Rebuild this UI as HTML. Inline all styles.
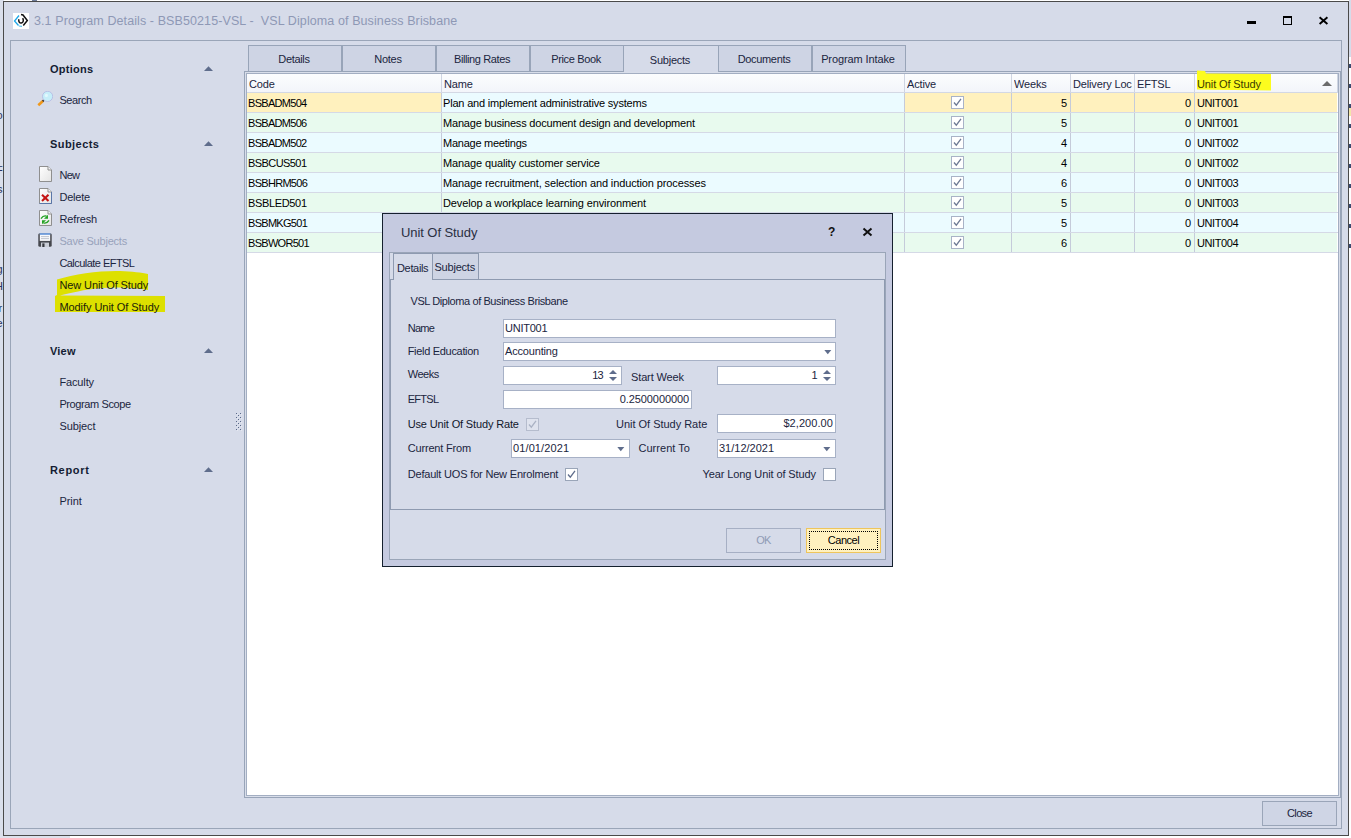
<!DOCTYPE html><html><head><meta charset="utf-8"><title>3.1 Program Details</title><style>
*{box-sizing:border-box}
html,body{margin:0;padding:0}
body{width:1351px;height:838px;overflow:hidden;background:#fff;position:relative;font-family:"Liberation Sans",sans-serif;font-size:11px;color:#1b2540;letter-spacing:-0.15px}
.a{position:absolute}
.t{position:absolute;white-space:pre;line-height:14px;height:14px}
#win{left:3px;top:1px;width:1346px;height:835px;background:#d6dbe9;border:1px solid #4a4a4a}
#panel{left:10px;top:40px;width:1332px;height:789px;border:1px solid #9aa5b8}
.gh{font-weight:bold;font-size:11px;color:#141c33;letter-spacing:0}
.arr{width:0;height:0;border-left:4.5px solid transparent;border-right:4.5px solid transparent;border-bottom:5px solid #5f6d8c}
.tab{position:absolute;top:45px;height:27px;width:94px;border:1px solid #98a4b8;background:#ced4e4;text-align:center;line-height:26px;font-size:11px;color:#1b2540;letter-spacing:0;padding-right:2px}
.tab.sel{background:#d6dbe9;border-bottom:none;height:27px;line-height:28px;z-index:2}
.cell{position:absolute;height:19px;line-height:21px;white-space:pre;overflow:hidden;color:#000;padding:0 2px}
.hd{position:absolute;top:74px;height:18px;line-height:20px;white-space:pre;overflow:hidden;color:#1b2540;padding:0 2px;background:linear-gradient(#fcfdfe,#f3f5fa);border-right:1px solid #cfd5e2}
.vl{position:absolute;width:1px;background:#c9cfdd}
.hl{position:absolute;height:1px;background:#d3d8e4}
.cb{position:absolute;width:13px;height:13px;border:1px solid #9aa5b8;background:#fff}
.inp{position:absolute;height:19px;border:1px solid #a7b1c6;background:#fff;line-height:17px;padding:0 2px 0 1px;white-space:pre;color:#1b2540}
.lbl{position:absolute;white-space:pre;line-height:14px;color:#1b2540}
</style></head><body>
<div class="a" style="left:0;top:0;width:4px;height:836px;background:#dadfeb"></div>
<div class="a" style="left:0;top:836px;width:70px;height:2px;background:#dde1ec"></div>
<div class="a" style="left:1349px;top:0;width:2px;height:57px;background:#d6dbe9"></div>
<div class="a" style="left:1349px;top:64px;width:2px;height:4px;background:#3b4a70"></div>
<div class="a" style="left:1349px;top:84px;width:2px;height:4px;background:#3b4a70"></div>
<div class="a" style="left:1349px;top:104px;width:2px;height:4px;background:#3b4a70"></div>
<div class="a" style="left:1349px;top:124px;width:2px;height:4px;background:#3b4a70"></div>
<div class="a" style="left:1349px;top:144px;width:2px;height:4px;background:#3b4a70"></div>
<div class="a" style="left:1349px;top:164px;width:2px;height:4px;background:#3b4a70"></div>
<div class="a" style="left:1349px;top:184px;width:2px;height:4px;background:#3b4a70"></div>
<div class="a" style="left:1349px;top:204px;width:2px;height:4px;background:#3b4a70"></div>
<div class="a" style="left:1349px;top:224px;width:2px;height:4px;background:#3b4a70"></div>
<div class="a" style="left:1349px;top:244px;width:2px;height:4px;background:#3b4a70"></div>
<div class="a" style="left:1349px;top:108px;width:2px;height:8px;background:#f3e6a8"></div>
<div class="t" style="left:-3.5px;top:108px;color:#2a3560">o</div>
<div class="t" style="left:-4px;top:163px;color:#2a3560">F</div>
<div class="t" style="left:-3px;top:182px;color:#2a3560">s</div>
<div class="t" style="left:-3.5px;top:262px;color:#2a3560">g</div>
<div class="t" style="left:-5px;top:279px;color:#2a3560">H</div>
<div class="t" style="left:-1.5px;top:301px;color:#2a3560">r</div>
<div class="t" style="left:-3.5px;top:316px;color:#2a3560">e</div>
<div class="a" style="left:32px;top:0;width:5px;height:1px;background:#6f7d9b"></div>
<div id="win" class="a"></div>
<div id="panel" class="a"></div>
<svg class="a" style="left:13px;top:13px" width="16" height="16" viewBox="0 0 16 16"><rect width="16" height="16" fill="#fff"/><path d="M6 2.5 L1.5 8 L5.5 12.5" fill="none" stroke="#1ea7e8" stroke-width="1.3"/><path d="M5.8 13 L9 13.3" fill="none" stroke="#58c3ef" stroke-width="1.2"/><path d="M8 1.6 L10 2 L14.3 7.6 L10.3 12.4" fill="none" stroke="#111" stroke-width="1.5"/><path d="M5.9 6.2 C5.3 8.6 6.6 10.2 8.3 10 C10.2 9.7 11 7.6 9.7 5.2" fill="none" stroke="#111" stroke-width="1.5"/></svg>
<div class="t" style="left:34px;top:13px;font-size:12.5px;color:#8e98b5;letter-spacing:0.095px;line-height:16px;height:16px">3.1 Program Details - BSB50215-VSL -  VSL Diploma of Business Brisbane</div>
<div class="a" style="left:1247px;top:21px;width:9px;height:3px;background:#000"></div>
<div class="a" style="left:1283px;top:16px;width:9px;height:9px;border:1px solid #000;border-top-width:2px"></div>
<svg class="a" style="left:1318px;top:16px" width="11" height="10" viewBox="0 0 11 10"><path d="M1.6 1.2 L9.4 8 M9.4 1.2 L1.6 8" stroke="#000" stroke-width="1.9" fill="none"/></svg>
<div class="t gh" style="left:50px;top:62px;letter-spacing:0.241px">Options</div>
<svg class="a" style="left:204px;top:66px" width="9" height="5" viewBox="0 0 9 5"><path d="M0 5 H9 L4.5 0.2 Z" fill="#5f6d8c"/></svg>
<div class="t" style="left:59.4px;top:93px;color:#1b2540;letter-spacing:-0.411px">Search</div>
<div class="t gh" style="left:50px;top:137px;letter-spacing:0.436px">Subjects</div>
<svg class="a" style="left:204px;top:141px" width="9" height="5" viewBox="0 0 9 5"><path d="M0 5 H9 L4.5 0.2 Z" fill="#5f6d8c"/></svg>
<svg class="a" style="left:50px;top:265px" width="125" height="52" viewBox="50 265 125 52"><path d="M57 279.5 C75 274 100 270.5 120 271 C132 271.5 142 272.5 148 274 L148 290 C138 288 120 286.5 100 288 C85 289.5 70 293 60 295.5 L165 296 L165 312 L55 312 L55 296 L57 295 Z" fill="#dde000"/></svg>
<div class="t" style="left:59.4px;top:168px;color:#1b2540;letter-spacing:-0.700px">New</div>
<div class="t" style="left:59.4px;top:190px;color:#1b2540;letter-spacing:-0.200px">Delete</div>
<div class="t" style="left:59.4px;top:212px;color:#1b2540;letter-spacing:-0.120px">Refresh</div>
<div class="t" style="left:59.4px;top:234px;color:#98a2bb;letter-spacing:-0.210px">Save Subjects</div>
<div class="t" style="left:59.4px;top:256px;color:#1b2540;letter-spacing:-0.539px">Calculate EFTSL</div>
<div class="t" style="left:59.4px;top:278px;color:#1a2208;letter-spacing:-0.099px">New Unit Of Study</div>
<div class="t" style="left:59.4px;top:300px;color:#1a2208;letter-spacing:-0.056px">Modify Unit Of Study</div>
<div class="t gh" style="left:50px;top:344px;letter-spacing:0.210px">View</div>
<svg class="a" style="left:204px;top:348px" width="9" height="5" viewBox="0 0 9 5"><path d="M0 5 H9 L4.5 0.2 Z" fill="#5f6d8c"/></svg>
<div class="t" style="left:59.4px;top:375px;color:#1b2540;letter-spacing:-0.126px">Faculty</div>
<div class="t" style="left:59.4px;top:397px;color:#1b2540;letter-spacing:-0.394px">Program Scope</div>
<div class="t" style="left:59.4px;top:419px;color:#1b2540;letter-spacing:-0.082px">Subject</div>
<div class="t gh" style="left:50px;top:463px;letter-spacing:0.671px">Report</div>
<svg class="a" style="left:204px;top:467px" width="9" height="5" viewBox="0 0 9 5"><path d="M0 5 H9 L4.5 0.2 Z" fill="#5f6d8c"/></svg>
<div class="t" style="left:59.4px;top:494px;color:#1b2540;letter-spacing:-0.055px">Print</div>
<svg class="a" style="left:37px;top:91px" width="16" height="16" viewBox="0 0 16 16"><path d="M1.3 14.2 L6.2 9.7" stroke="#f0981a" stroke-width="2.6" stroke-linecap="butt"/><path d="M5.6 10.2 L6.8 9.2" stroke="#3a3a3a" stroke-width="2"/><circle cx="10.6" cy="5.4" r="5.1" fill="#c6eef9" stroke="#b3b8e2" stroke-width="0.8"/><circle cx="9.4" cy="4.4" r="1.6" fill="#e2f8fd"/></svg>
<svg class="a" style="left:38px;top:166px" width="16" height="16" viewBox="0 0 16 16"><defs><linearGradient id="pg166" x1="0" y1="0" x2="1" y2="1"><stop offset="0" stop-color="#fff"/><stop offset="1" stop-color="#e4e4e4"/></linearGradient></defs><path d="M1.5 0.5 H10 L13.5 4 V15.5 H1.5 Z" fill="url(#pg166)" stroke="#8f8f8f" stroke-width="1"/><path d="M10 0.5 V4 H13.5" fill="#f4f4f4" stroke="#8f8f8f" stroke-width="1"/></svg>
<svg class="a" style="left:38px;top:188px" width="16" height="16" viewBox="0 0 16 16"><defs><linearGradient id="pg188" x1="0" y1="0" x2="1" y2="1"><stop offset="0" stop-color="#fff"/><stop offset="1" stop-color="#e4e4e4"/></linearGradient></defs><path d="M1.5 0.5 H10 L13.5 4 V15.5 H1.5 Z" fill="url(#pg188)" stroke="#8f8f8f" stroke-width="1"/><path d="M10 0.5 V4 H13.5" fill="#f4f4f4" stroke="#8f8f8f" stroke-width="1"/><path d="M1.5 15.5 H13.5 V4" fill="none" stroke="#5a76a8" stroke-width="1"/><path d="M4 6.8 L10.5 13 M10.5 6.8 L4 13" stroke="#c41414" stroke-width="2.1" fill="none"/></svg>
<svg class="a" style="left:38px;top:210px" width="16" height="16" viewBox="0 0 16 16"><defs><linearGradient id="pg210" x1="0" y1="0" x2="1" y2="1"><stop offset="0" stop-color="#fff"/><stop offset="1" stop-color="#e4e4e4"/></linearGradient></defs><path d="M1.5 0.5 H10 L13.5 4 V15.5 H1.5 Z" fill="url(#pg210)" stroke="#8f8f8f" stroke-width="1"/><path d="M10 0.5 V4 H13.5" fill="#f4f4f4" stroke="#8f8f8f" stroke-width="1"/><path d="M3 8.7 C4.4 6.6 6.2 5.3 8.6 6.2" fill="none" stroke="#22a222" stroke-width="1.4"/><path d="M10 4.8 V8.8 H6 Z" fill="#22a222"/><path d="M11 10.3 C9.6 12.4 7.8 13.7 5.4 12.8" fill="none" stroke="#22a222" stroke-width="1.4"/><path d="M4 14.2 V10.2 H8 Z" fill="#22a222"/></svg>
<svg class="a" style="left:38px;top:233px" width="14" height="14" viewBox="0 0 14 14"><rect x="0.3" y="0.3" width="13.4" height="13.4" rx="1.5" fill="#45474d"/><rect x="1.8" y="0.3" width="10.4" height="7.6" fill="#f7f8fb"/><rect x="1.8" y="0.3" width="10.4" height="1.4" fill="#4d86d6"/><path d="M3 3.6 H11 M3 5.6 H11" stroke="#b9bec8" stroke-width="0.9"/><rect x="3" y="9.6" width="8" height="4.4" fill="#c9cdd6"/><rect x="4.3" y="10.4" width="2.2" height="3.6" fill="#35373d"/></svg>
<svg class="a" style="left:235px;top:412px" width="8" height="20" viewBox="0 0 8 20"><rect x="1" y="1" width="1" height="1" fill="#5b6a8a"/><rect x="2" y="2" width="1" height="1" fill="#e6e9f2"/><rect x="5" y="1" width="1" height="1" fill="#5b6a8a"/><rect x="6" y="2" width="1" height="1" fill="#e6e9f2"/><rect x="3" y="3" width="1" height="1" fill="#5b6a8a"/><rect x="4" y="4" width="1" height="1" fill="#e6e9f2"/><rect x="1" y="5" width="1" height="1" fill="#5b6a8a"/><rect x="2" y="6" width="1" height="1" fill="#e6e9f2"/><rect x="5" y="5" width="1" height="1" fill="#5b6a8a"/><rect x="6" y="6" width="1" height="1" fill="#e6e9f2"/><rect x="3" y="7" width="1" height="1" fill="#5b6a8a"/><rect x="4" y="8" width="1" height="1" fill="#e6e9f2"/><rect x="1" y="9" width="1" height="1" fill="#5b6a8a"/><rect x="2" y="10" width="1" height="1" fill="#e6e9f2"/><rect x="5" y="9" width="1" height="1" fill="#5b6a8a"/><rect x="6" y="10" width="1" height="1" fill="#e6e9f2"/><rect x="3" y="11" width="1" height="1" fill="#5b6a8a"/><rect x="4" y="12" width="1" height="1" fill="#e6e9f2"/><rect x="1" y="13" width="1" height="1" fill="#5b6a8a"/><rect x="2" y="14" width="1" height="1" fill="#e6e9f2"/><rect x="5" y="13" width="1" height="1" fill="#5b6a8a"/><rect x="6" y="14" width="1" height="1" fill="#e6e9f2"/><rect x="3" y="15" width="1" height="1" fill="#5b6a8a"/><rect x="4" y="16" width="1" height="1" fill="#e6e9f2"/><rect x="1" y="17" width="1" height="1" fill="#5b6a8a"/><rect x="2" y="18" width="1" height="1" fill="#e6e9f2"/><rect x="5" y="17" width="1" height="1" fill="#5b6a8a"/><rect x="6" y="18" width="1" height="1" fill="#e6e9f2"/></svg>
<div class="tab" style="left:248px;letter-spacing:-0.321px">Details</div>
<div class="tab" style="left:342px;letter-spacing:-0.284px">Notes</div>
<div class="tab" style="left:436px;letter-spacing:-0.387px">Billing Rates</div>
<div class="tab" style="left:530px;letter-spacing:-0.355px">Price Book</div>
<div class="tab sel" style="left:623px;width:96px;letter-spacing:-0.242px">Subjects</div>
<div class="tab" style="left:718px;letter-spacing:-0.329px">Documents</div>
<div class="tab" style="left:812px;letter-spacing:-0.108px">Program Intake</div>
<div class="a" style="left:244px;top:71px;width:1097px;height:727px;border:1px solid #98a4b8;background:#d9deea"></div>
<div class="a" style="left:246px;top:73px;width:1093px;height:723px;border:1px solid #a3aec2;background:#fff"></div>
<div class="hd" style="left:247px;width:195px"><div style="overflow:hidden;height:18px">Code</div></div>
<div class="hd" style="left:442px;width:463px"><div style="overflow:hidden;height:18px">Name</div></div>
<div class="hd" style="left:905px;width:107px"><div style="overflow:hidden;height:18px">Active</div></div>
<div class="hd" style="left:1012px;width:59px"><div style="overflow:hidden;height:18px">Weeks</div></div>
<div class="hd" style="left:1071px;width:64px"><div style="overflow:hidden;height:18px">Delivery Location</div></div>
<div class="hd" style="left:1135px;width:60px"><div style="overflow:hidden;height:18px">EFTSL</div></div>
<div class="hd" style="left:1195px;width:143px"><div style="overflow:hidden;height:18px"></div></div>
<svg class="a" style="left:1190px;top:68px" width="90" height="26" viewBox="1190 68 90 26"><path d="M1197 70.5 L1205 71 L1206 73.5 L1271 74 L1271 90.5 L1197 89.5 Z" fill="#fcfc1e"/></svg>
<div class="t" style="left:1197px;top:77px;color:#3a3a00;letter-spacing:-0.118px">Unit Of Study</div>
<div class="a" style="left:1322px;top:81px;width:0;height:0;border-left:5px solid transparent;border-right:5px solid transparent;border-bottom:5px solid #6b6b6b"></div>
<div class="hl" style="left:247px;top:92px;width:1091px;background:#d3d8e4"></div>
<div class="cell" style="left:247px;top:93px;width:194px;background:#fff1be;text-align:left;padding:0 3px 0 1px;letter-spacing:-0.700px">BSBADM504</div>
<div class="vl" style="left:441px;top:93px;height:19px;background:#c5cbda"></div>
<div class="cell" style="left:442px;top:93px;width:462px;background:#ebfbff;text-align:left;padding:0 0 0 1px;letter-spacing:-0.188px">Plan and implement administrative systems</div>
<div class="vl" style="left:904px;top:93px;height:19px;background:#c5cbda"></div>
<div class="cell" style="left:905px;top:93px;width:106px;background:#fff1be;text-align:left;padding:0 3px 0 1px"></div>
<div class="vl" style="left:1011px;top:93px;height:19px;background:#c5cbda"></div>
<div class="cell" style="left:1012px;top:93px;width:58px;background:#fff1be;text-align:right;padding:0 3px 0 0">5</div>
<div class="vl" style="left:1070px;top:93px;height:19px;background:#c5cbda"></div>
<div class="cell" style="left:1071px;top:93px;width:63px;background:#fff1be;text-align:left;padding:0 3px 0 1px"></div>
<div class="vl" style="left:1134px;top:93px;height:19px;background:#c5cbda"></div>
<div class="cell" style="left:1135px;top:93px;width:59px;background:#fff1be;text-align:right;padding:0 3px 0 0">0</div>
<div class="vl" style="left:1194px;top:93px;height:19px;background:#c5cbda"></div>
<div class="cell" style="left:1195px;top:93px;width:142px;background:#fff1be;text-align:left;padding:0 0 0 2px;letter-spacing:-0.386px">UNIT001</div>
<div class="hl" style="left:247px;top:112px;width:1091px;background:#d5d9e6"></div>
<div class="cb" style="left:951px;top:96px;border-color:#a9b3c7"><svg width="11" height="11" viewBox="0 0 11 11" style="position:absolute;left:0;top:0"><path d="M2 5.5 L4.3 8.2 L9 1.8" fill="none" stroke="#6e7a94" stroke-width="1.3"/></svg></div>
<div class="cell" style="left:247px;top:113px;width:194px;background:#e8faee;text-align:left;padding:0 3px 0 1px;letter-spacing:-0.700px">BSBADM506</div>
<div class="vl" style="left:441px;top:113px;height:19px;background:#c5cbda"></div>
<div class="cell" style="left:442px;top:113px;width:462px;background:#e8faee;text-align:left;padding:0 0 0 1px;letter-spacing:-0.185px">Manage business document design and development</div>
<div class="vl" style="left:904px;top:113px;height:19px;background:#c5cbda"></div>
<div class="cell" style="left:905px;top:113px;width:106px;background:#e8faee;text-align:left;padding:0 3px 0 1px"></div>
<div class="vl" style="left:1011px;top:113px;height:19px;background:#c5cbda"></div>
<div class="cell" style="left:1012px;top:113px;width:58px;background:#e8faee;text-align:right;padding:0 3px 0 0">5</div>
<div class="vl" style="left:1070px;top:113px;height:19px;background:#c5cbda"></div>
<div class="cell" style="left:1071px;top:113px;width:63px;background:#e8faee;text-align:left;padding:0 3px 0 1px"></div>
<div class="vl" style="left:1134px;top:113px;height:19px;background:#c5cbda"></div>
<div class="cell" style="left:1135px;top:113px;width:59px;background:#e8faee;text-align:right;padding:0 3px 0 0">0</div>
<div class="vl" style="left:1194px;top:113px;height:19px;background:#c5cbda"></div>
<div class="cell" style="left:1195px;top:113px;width:142px;background:#e8faee;text-align:left;padding:0 0 0 2px;letter-spacing:-0.386px">UNIT001</div>
<div class="hl" style="left:247px;top:132px;width:1091px;background:#d5d9e6"></div>
<div class="cb" style="left:951px;top:116px;border-color:#a9b3c7"><svg width="11" height="11" viewBox="0 0 11 11" style="position:absolute;left:0;top:0"><path d="M2 5.5 L4.3 8.2 L9 1.8" fill="none" stroke="#6e7a94" stroke-width="1.3"/></svg></div>
<div class="cell" style="left:247px;top:133px;width:194px;background:#ebfbff;text-align:left;padding:0 3px 0 1px;letter-spacing:-0.700px">BSBADM502</div>
<div class="vl" style="left:441px;top:133px;height:19px;background:#c5cbda"></div>
<div class="cell" style="left:442px;top:133px;width:462px;background:#ebfbff;text-align:left;padding:0 0 0 1px;letter-spacing:-0.246px">Manage meetings</div>
<div class="vl" style="left:904px;top:133px;height:19px;background:#c5cbda"></div>
<div class="cell" style="left:905px;top:133px;width:106px;background:#ebfbff;text-align:left;padding:0 3px 0 1px"></div>
<div class="vl" style="left:1011px;top:133px;height:19px;background:#c5cbda"></div>
<div class="cell" style="left:1012px;top:133px;width:58px;background:#ebfbff;text-align:right;padding:0 3px 0 0">4</div>
<div class="vl" style="left:1070px;top:133px;height:19px;background:#c5cbda"></div>
<div class="cell" style="left:1071px;top:133px;width:63px;background:#ebfbff;text-align:left;padding:0 3px 0 1px"></div>
<div class="vl" style="left:1134px;top:133px;height:19px;background:#c5cbda"></div>
<div class="cell" style="left:1135px;top:133px;width:59px;background:#ebfbff;text-align:right;padding:0 3px 0 0">0</div>
<div class="vl" style="left:1194px;top:133px;height:19px;background:#c5cbda"></div>
<div class="cell" style="left:1195px;top:133px;width:142px;background:#ebfbff;text-align:left;padding:0 0 0 2px;letter-spacing:-0.386px">UNIT002</div>
<div class="hl" style="left:247px;top:152px;width:1091px;background:#d5d9e6"></div>
<div class="cb" style="left:951px;top:136px;border-color:#a9b3c7"><svg width="11" height="11" viewBox="0 0 11 11" style="position:absolute;left:0;top:0"><path d="M2 5.5 L4.3 8.2 L9 1.8" fill="none" stroke="#6e7a94" stroke-width="1.3"/></svg></div>
<div class="cell" style="left:247px;top:153px;width:194px;background:#e8faee;text-align:left;padding:0 3px 0 1px;letter-spacing:-0.574px">BSBCUS501</div>
<div class="vl" style="left:441px;top:153px;height:19px;background:#c5cbda"></div>
<div class="cell" style="left:442px;top:153px;width:462px;background:#e8faee;text-align:left;padding:0 0 0 1px;letter-spacing:-0.127px">Manage quality customer service</div>
<div class="vl" style="left:904px;top:153px;height:19px;background:#c5cbda"></div>
<div class="cell" style="left:905px;top:153px;width:106px;background:#e8faee;text-align:left;padding:0 3px 0 1px"></div>
<div class="vl" style="left:1011px;top:153px;height:19px;background:#c5cbda"></div>
<div class="cell" style="left:1012px;top:153px;width:58px;background:#e8faee;text-align:right;padding:0 3px 0 0">4</div>
<div class="vl" style="left:1070px;top:153px;height:19px;background:#c5cbda"></div>
<div class="cell" style="left:1071px;top:153px;width:63px;background:#e8faee;text-align:left;padding:0 3px 0 1px"></div>
<div class="vl" style="left:1134px;top:153px;height:19px;background:#c5cbda"></div>
<div class="cell" style="left:1135px;top:153px;width:59px;background:#e8faee;text-align:right;padding:0 3px 0 0">0</div>
<div class="vl" style="left:1194px;top:153px;height:19px;background:#c5cbda"></div>
<div class="cell" style="left:1195px;top:153px;width:142px;background:#e8faee;text-align:left;padding:0 0 0 2px;letter-spacing:-0.386px">UNIT002</div>
<div class="hl" style="left:247px;top:172px;width:1091px;background:#d5d9e6"></div>
<div class="cb" style="left:951px;top:156px;border-color:#a9b3c7"><svg width="11" height="11" viewBox="0 0 11 11" style="position:absolute;left:0;top:0"><path d="M2 5.5 L4.3 8.2 L9 1.8" fill="none" stroke="#6e7a94" stroke-width="1.3"/></svg></div>
<div class="cell" style="left:247px;top:173px;width:194px;background:#ebfbff;text-align:left;padding:0 3px 0 1px;letter-spacing:-0.700px">BSBHRM506</div>
<div class="vl" style="left:441px;top:173px;height:19px;background:#c5cbda"></div>
<div class="cell" style="left:442px;top:173px;width:462px;background:#ebfbff;text-align:left;padding:0 0 0 1px;letter-spacing:-0.116px">Manage recruitment, selection and induction processes</div>
<div class="vl" style="left:904px;top:173px;height:19px;background:#c5cbda"></div>
<div class="cell" style="left:905px;top:173px;width:106px;background:#ebfbff;text-align:left;padding:0 3px 0 1px"></div>
<div class="vl" style="left:1011px;top:173px;height:19px;background:#c5cbda"></div>
<div class="cell" style="left:1012px;top:173px;width:58px;background:#ebfbff;text-align:right;padding:0 3px 0 0">6</div>
<div class="vl" style="left:1070px;top:173px;height:19px;background:#c5cbda"></div>
<div class="cell" style="left:1071px;top:173px;width:63px;background:#ebfbff;text-align:left;padding:0 3px 0 1px"></div>
<div class="vl" style="left:1134px;top:173px;height:19px;background:#c5cbda"></div>
<div class="cell" style="left:1135px;top:173px;width:59px;background:#ebfbff;text-align:right;padding:0 3px 0 0">0</div>
<div class="vl" style="left:1194px;top:173px;height:19px;background:#c5cbda"></div>
<div class="cell" style="left:1195px;top:173px;width:142px;background:#ebfbff;text-align:left;padding:0 0 0 2px;letter-spacing:-0.386px">UNIT003</div>
<div class="hl" style="left:247px;top:192px;width:1091px;background:#d5d9e6"></div>
<div class="cb" style="left:951px;top:176px;border-color:#a9b3c7"><svg width="11" height="11" viewBox="0 0 11 11" style="position:absolute;left:0;top:0"><path d="M2 5.5 L4.3 8.2 L9 1.8" fill="none" stroke="#6e7a94" stroke-width="1.3"/></svg></div>
<div class="cell" style="left:247px;top:193px;width:194px;background:#e8faee;text-align:left;padding:0 3px 0 1px;letter-spacing:-0.346px">BSBLED501</div>
<div class="vl" style="left:441px;top:193px;height:19px;background:#c5cbda"></div>
<div class="cell" style="left:442px;top:193px;width:462px;background:#e8faee;text-align:left;padding:0 0 0 1px;letter-spacing:-0.126px">Develop a workplace learning environment</div>
<div class="vl" style="left:904px;top:193px;height:19px;background:#c5cbda"></div>
<div class="cell" style="left:905px;top:193px;width:106px;background:#e8faee;text-align:left;padding:0 3px 0 1px"></div>
<div class="vl" style="left:1011px;top:193px;height:19px;background:#c5cbda"></div>
<div class="cell" style="left:1012px;top:193px;width:58px;background:#e8faee;text-align:right;padding:0 3px 0 0">5</div>
<div class="vl" style="left:1070px;top:193px;height:19px;background:#c5cbda"></div>
<div class="cell" style="left:1071px;top:193px;width:63px;background:#e8faee;text-align:left;padding:0 3px 0 1px"></div>
<div class="vl" style="left:1134px;top:193px;height:19px;background:#c5cbda"></div>
<div class="cell" style="left:1135px;top:193px;width:59px;background:#e8faee;text-align:right;padding:0 3px 0 0">0</div>
<div class="vl" style="left:1194px;top:193px;height:19px;background:#c5cbda"></div>
<div class="cell" style="left:1195px;top:193px;width:142px;background:#e8faee;text-align:left;padding:0 0 0 2px;letter-spacing:-0.386px">UNIT003</div>
<div class="hl" style="left:247px;top:212px;width:1091px;background:#d5d9e6"></div>
<div class="cb" style="left:951px;top:196px;border-color:#a9b3c7"><svg width="11" height="11" viewBox="0 0 11 11" style="position:absolute;left:0;top:0"><path d="M2 5.5 L4.3 8.2 L9 1.8" fill="none" stroke="#6e7a94" stroke-width="1.3"/></svg></div>
<div class="cell" style="left:247px;top:213px;width:194px;background:#ebfbff;text-align:left;padding:0 3px 0 1px;letter-spacing:-0.700px">BSBMKG501</div>
<div class="vl" style="left:441px;top:213px;height:19px;background:#c5cbda"></div>
<div class="cell" style="left:442px;top:213px;width:462px;background:#ebfbff;text-align:left;padding:0 0 0 1px;"></div>
<div class="vl" style="left:904px;top:213px;height:19px;background:#c5cbda"></div>
<div class="cell" style="left:905px;top:213px;width:106px;background:#ebfbff;text-align:left;padding:0 3px 0 1px"></div>
<div class="vl" style="left:1011px;top:213px;height:19px;background:#c5cbda"></div>
<div class="cell" style="left:1012px;top:213px;width:58px;background:#ebfbff;text-align:right;padding:0 3px 0 0">5</div>
<div class="vl" style="left:1070px;top:213px;height:19px;background:#c5cbda"></div>
<div class="cell" style="left:1071px;top:213px;width:63px;background:#ebfbff;text-align:left;padding:0 3px 0 1px"></div>
<div class="vl" style="left:1134px;top:213px;height:19px;background:#c5cbda"></div>
<div class="cell" style="left:1135px;top:213px;width:59px;background:#ebfbff;text-align:right;padding:0 3px 0 0">0</div>
<div class="vl" style="left:1194px;top:213px;height:19px;background:#c5cbda"></div>
<div class="cell" style="left:1195px;top:213px;width:142px;background:#ebfbff;text-align:left;padding:0 0 0 2px;letter-spacing:-0.386px">UNIT004</div>
<div class="hl" style="left:247px;top:232px;width:1091px;background:#d5d9e6"></div>
<div class="cb" style="left:951px;top:216px;border-color:#a9b3c7"><svg width="11" height="11" viewBox="0 0 11 11" style="position:absolute;left:0;top:0"><path d="M2 5.5 L4.3 8.2 L9 1.8" fill="none" stroke="#6e7a94" stroke-width="1.3"/></svg></div>
<div class="cell" style="left:247px;top:233px;width:194px;background:#e8faee;text-align:left;padding:0 3px 0 1px;letter-spacing:-0.700px">BSBWOR501</div>
<div class="vl" style="left:441px;top:233px;height:19px;background:#c5cbda"></div>
<div class="cell" style="left:442px;top:233px;width:462px;background:#e8faee;text-align:left;padding:0 0 0 1px;"></div>
<div class="vl" style="left:904px;top:233px;height:19px;background:#c5cbda"></div>
<div class="cell" style="left:905px;top:233px;width:106px;background:#e8faee;text-align:left;padding:0 3px 0 1px"></div>
<div class="vl" style="left:1011px;top:233px;height:19px;background:#c5cbda"></div>
<div class="cell" style="left:1012px;top:233px;width:58px;background:#e8faee;text-align:right;padding:0 3px 0 0">6</div>
<div class="vl" style="left:1070px;top:233px;height:19px;background:#c5cbda"></div>
<div class="cell" style="left:1071px;top:233px;width:63px;background:#e8faee;text-align:left;padding:0 3px 0 1px"></div>
<div class="vl" style="left:1134px;top:233px;height:19px;background:#c5cbda"></div>
<div class="cell" style="left:1135px;top:233px;width:59px;background:#e8faee;text-align:right;padding:0 3px 0 0">0</div>
<div class="vl" style="left:1194px;top:233px;height:19px;background:#c5cbda"></div>
<div class="cell" style="left:1195px;top:233px;width:142px;background:#e8faee;text-align:left;padding:0 0 0 2px;letter-spacing:-0.386px">UNIT004</div>
<div class="hl" style="left:247px;top:252px;width:1091px;background:#d5d9e6"></div>
<div class="cb" style="left:951px;top:236px;border-color:#a9b3c7"><svg width="11" height="11" viewBox="0 0 11 11" style="position:absolute;left:0;top:0"><path d="M2 5.5 L4.3 8.2 L9 1.8" fill="none" stroke="#6e7a94" stroke-width="1.3"/></svg></div>
<div class="a" style="left:382px;top:213px;width:511px;height:354px;background:#c5cae0;border:1px solid #15202e"></div>
<div class="t" style="left:401px;top:224px;font-size:13px;line-height:17px;height:17px;color:#2a2f42;letter-spacing:-0.076px">Unit Of Study</div>
<div class="t" style="left:828px;top:224px;font-size:12px;font-weight:bold;line-height:16px;height:16px;color:#111;letter-spacing:0">?</div>
<svg class="a" style="left:862px;top:227px" width="11" height="10" viewBox="0 0 11 10"><path d="M1.5 1.5 L9.5 8.5 M9.5 1.5 L1.5 8.5" stroke="#111" stroke-width="2" fill="none"/></svg>
<div class="a" style="left:389px;top:252px;width:497px;height:308px;background:#d6dbe9;border:1px solid #9aa5b8"></div>
<div class="a" style="left:390px;top:279px;width:495px;height:231px;border:1px solid #8e9ab0"></div>
<div class="a" style="left:393px;top:253px;width:40px;height:27px;border:1px solid #8e9ab0;border-bottom:none;background:#d6dbe9"></div>
<div class="a" style="left:432px;top:253px;width:47px;height:26px;border:1px solid #8e9ab0;border-bottom:none;background:#ced4e4"></div>
<div class="lbl" style="left:397px;top:261px;color:#1b2540;letter-spacing:-0.337px">Details</div>
<div class="lbl" style="left:434.5px;top:260px;color:#1b2540;letter-spacing:-0.213px">Subjects</div>
<div class="lbl" style="left:410.5px;top:294px;color:#1b2540;letter-spacing:-0.409px">VSL Diploma of Business Brisbane</div>
<div class="lbl" style="left:407.7px;top:321px;color:#1b2540;letter-spacing:-0.700px">Name</div>
<div class="inp" style="left:503px;top:319px;width:333px;letter-spacing:-0.253px">UNIT001</div>
<div class="lbl" style="left:407.7px;top:344px;color:#1b2540;letter-spacing:-0.309px">Field Education</div>
<div class="inp" style="left:503px;top:342px;width:333px;letter-spacing:-0.170px">Accounting</div>
<svg class="a" style="left:824px;top:350px" width="8" height="5" viewBox="0 0 8 5"><path d="M0.3 0 H7.3 L3.8 4.2 Z" fill="#5f6d8c"/></svg>
<div class="lbl" style="left:407.7px;top:367px;color:#1b2540;letter-spacing:-0.455px">Weeks</div>
<div class="inp" style="left:503px;top:366px;width:119px;letter-spacing:-0.700px;text-align:right;padding-right:18px">13</div>
<div class="a" style="left:609px;top:370px;width:0;height:0;border-left:4px solid transparent;border-right:4px solid transparent;border-bottom:4px solid #5f6d8c"></div><div class="a" style="left:609px;top:377px;width:0;height:0;border-left:4px solid transparent;border-right:4px solid transparent;border-top:4px solid #5f6d8c"></div>
<div class="lbl" style="left:631px;top:370px;color:#1b2540;letter-spacing:-0.134px">Start Week</div>
<div class="inp" style="left:717px;top:366px;width:119px;letter-spacing:-0.700px;text-align:right;padding-right:18px">1</div>
<div class="a" style="left:823px;top:370px;width:0;height:0;border-left:4px solid transparent;border-right:4px solid transparent;border-bottom:4px solid #5f6d8c"></div><div class="a" style="left:823px;top:377px;width:0;height:0;border-left:4px solid transparent;border-right:4px solid transparent;border-top:4px solid #5f6d8c"></div>
<div class="lbl" style="left:407.7px;top:392px;color:#1b2540;letter-spacing:-0.700px">EFTSL</div>
<div class="inp" style="left:503px;top:390px;width:189px;letter-spacing:-0.096px;text-align:right;padding-right:2px">0.2500000000</div>
<div class="lbl" style="left:407.7px;top:417px;color:#10162b;letter-spacing:-0.144px">Use Unit Of Study Rate</div>
<div class="cb" style="left:526px;top:418px;border-color:#b5bccd;background:#dfe3ee"><svg width="11" height="11" viewBox="0 0 11 11" style="position:absolute;left:0;top:0"><path d="M2 5.5 L4.3 8.2 L9 1.8" fill="none" stroke="#aab2c4" stroke-width="1.3"/></svg></div>
<div class="lbl" style="left:616.1px;top:417px;color:#1b2540;letter-spacing:-0.030px">Unit Of Study Rate</div>
<div class="inp" style="left:717px;top:414px;width:119px;letter-spacing:0.070px;text-align:right;padding-right:2px">$2,200.00</div>
<div class="lbl" style="left:407.7px;top:441px;color:#1b2540;letter-spacing:-0.173px">Current From</div>
<div class="inp" style="left:511px;top:439px;width:119px;letter-spacing:0.116px">01/01/2021</div>
<svg class="a" style="left:617px;top:447px" width="8" height="5" viewBox="0 0 8 5"><path d="M0.3 0 H7.3 L3.8 4.2 Z" fill="#5f6d8c"/></svg>
<div class="lbl" style="left:638.4px;top:441px;color:#1b2540;letter-spacing:0.049px">Current To</div>
<div class="inp" style="left:717px;top:439px;width:119px;letter-spacing:0.005px">31/12/2021</div>
<svg class="a" style="left:823px;top:447px" width="8" height="5" viewBox="0 0 8 5"><path d="M0.3 0 H7.3 L3.8 4.2 Z" fill="#5f6d8c"/></svg>
<div class="lbl" style="left:407.7px;top:467px;color:#1b2540;letter-spacing:-0.186px">Default UOS for New Enrolment</div>
<div class="cb" style="left:565px;top:468px"><svg width="11" height="11" viewBox="0 0 11 11" style="position:absolute;left:0;top:0"><path d="M2 5.5 L4.3 8.2 L9 1.8" fill="none" stroke="#5f6d8c" stroke-width="1.3"/></svg></div>
<div class="lbl" style="left:702.6px;top:467px;color:#1b2540;letter-spacing:-0.109px">Year Long Unit of Study</div>
<div class="cb" style="left:823px;top:468px"></div>
<div class="a" style="left:726px;top:528px;width:75px;height:25px;border:1px solid #a6afc4;background:#d6dbe9;text-align:center;line-height:23px;color:#8f9ab5;letter-spacing:-0.700px">OK</div>
<div class="a" style="left:806px;top:528px;width:75px;height:25px;border:1px solid #eec55c;background:#fff1bf;text-align:center;line-height:23px;color:#000"><div class="a" style="left:2px;top:2px;right:2px;bottom:2px;border:1px dotted #000"></div><span style="letter-spacing:-0.488px">Cancel</span></div>
<div class="a" style="left:1262px;top:801px;width:75px;height:25px;border:1px solid #9aa5b8;background:#cfd5e5;text-align:center;line-height:23px;color:#1b2540;letter-spacing:-0.656px">Close</div>
</body></html>
